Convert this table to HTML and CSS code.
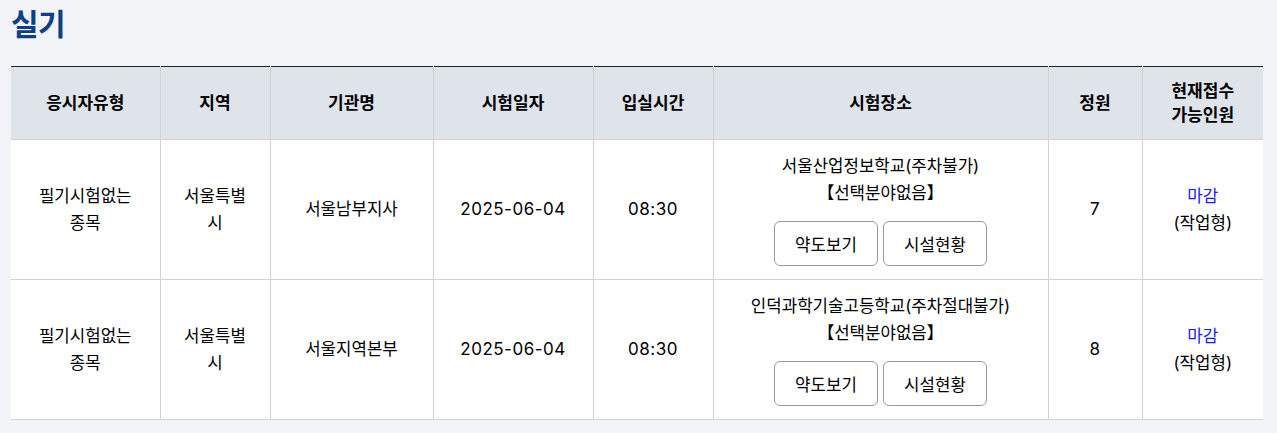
FILE: index.html
```html
<!DOCTYPE html>
<html lang="ko">
<head>
<meta charset="utf-8">
<link rel="stylesheet" href="styles.css">
</head>
<body>
<div class="page">
  <h2 class="title">실기</h2>
  <table class="exam">
    <colgroup>
      <col style="width:149px"><col style="width:110px"><col style="width:163px"><col style="width:160px"><col style="width:120px"><col style="width:335px"><col style="width:94px"><col style="width:121px">
    </colgroup>
    <thead>
      <tr>
        <th>응시자유형</th><th>지역</th><th>기관명</th><th>시험일자</th><th>입실시간</th><th>시험장소</th><th>정원</th><th>현재접수<br>가능인원</th>
      </tr>
    </thead>
    <tbody>
      <tr>
        <td>필기시험없는<br>종목</td>
        <td>서울특별<br>시</td>
        <td>서울남부지사</td>
        <td class="num">2025-06-04</td>
        <td class="num">08:30</td>
        <td>
          <div class="place">서울산업정보학교(주차불가)<br>【선택분야없음】</div>
          <div class="btns"><button class="btn">약도보기</button><button class="btn">시설현황</button></div>
        </td>
        <td class="num">7</td>
        <td><span class="closed">마감</span><br>(작업형)</td>
      </tr>
      <tr>
        <td>필기시험없는<br>종목</td>
        <td>서울특별<br>시</td>
        <td>서울지역본부</td>
        <td class="num">2025-06-04</td>
        <td class="num">08:30</td>
        <td>
          <div class="place">인덕과학기술고등학교(주차절대불가)<br>【선택분야없음】</div>
          <div class="btns"><button class="btn">약도보기</button><button class="btn">시설현황</button></div>
        </td>
        <td class="num">8</td>
        <td><span class="closed">마감</span><br>(작업형)</td>
      </tr>
    </tbody>
  </table>
</div>
</body>
</html>
```
FILE: styles.css
```css
html, body {
  margin: 0;
  padding: 0;
  background: #f1f3f7;
}
body {
  font-family: Inter, "Noto Sans CJK KR", sans-serif;
  color: #000;
}
.page {
  padding: 0 0 0 11px;
}
.title {
  margin: 0;
  padding-top: 4px;
  height: 66px;
  box-sizing: border-box;
  font-size: 30px;
  font-weight: 700;
  color: #0c3f87;
  line-height: 40px;
  letter-spacing: -0.5px;
}
.exam {
  width: 1252px;
  table-layout: fixed;
  border-collapse: collapse;
  border-top: 1px solid #222;
  background: #fff;
}
.exam th {
  background: #dfe3ea;
  height: 72px;
  font-size: 17px;
  font-weight: 700;
  line-height: 24px;
  padding: 0;
  border-left: 1px solid #d2d2d2;
  border-bottom: 1px solid #d2d2d2;
  text-align: center;
  color: #000;
}
.exam td {
  height: 139px;
  font-size: 16.8px;
  line-height: 27px;
  padding: 0;
  text-align: center;
  border-left: 1px solid #d2d2d2;
  border-bottom: 1px solid #d2d2d2;
}
.exam td.num {
  font-size: 17px;
  font-weight: 400;
  letter-spacing: 0.5px;
}
.exam th:first-child, .exam td:first-child {
  border-left: none;
}
.place {
  padding-top: 0;
}
.btns {
  display: flex;
  justify-content: center;
  gap: 5px;
  margin-top: 14px;
}
.btn {
  width: 104px;
  height: 45px;
  background: #fff;
  border: 1px solid #9a9a9a;
  border-radius: 6px;
  font-family: Inter, "Noto Sans CJK KR", sans-serif;
  font-size: 16.8px;
  color: #000;
  padding: 0;
}
.closed {
  color: #1a1aff;
}
```
